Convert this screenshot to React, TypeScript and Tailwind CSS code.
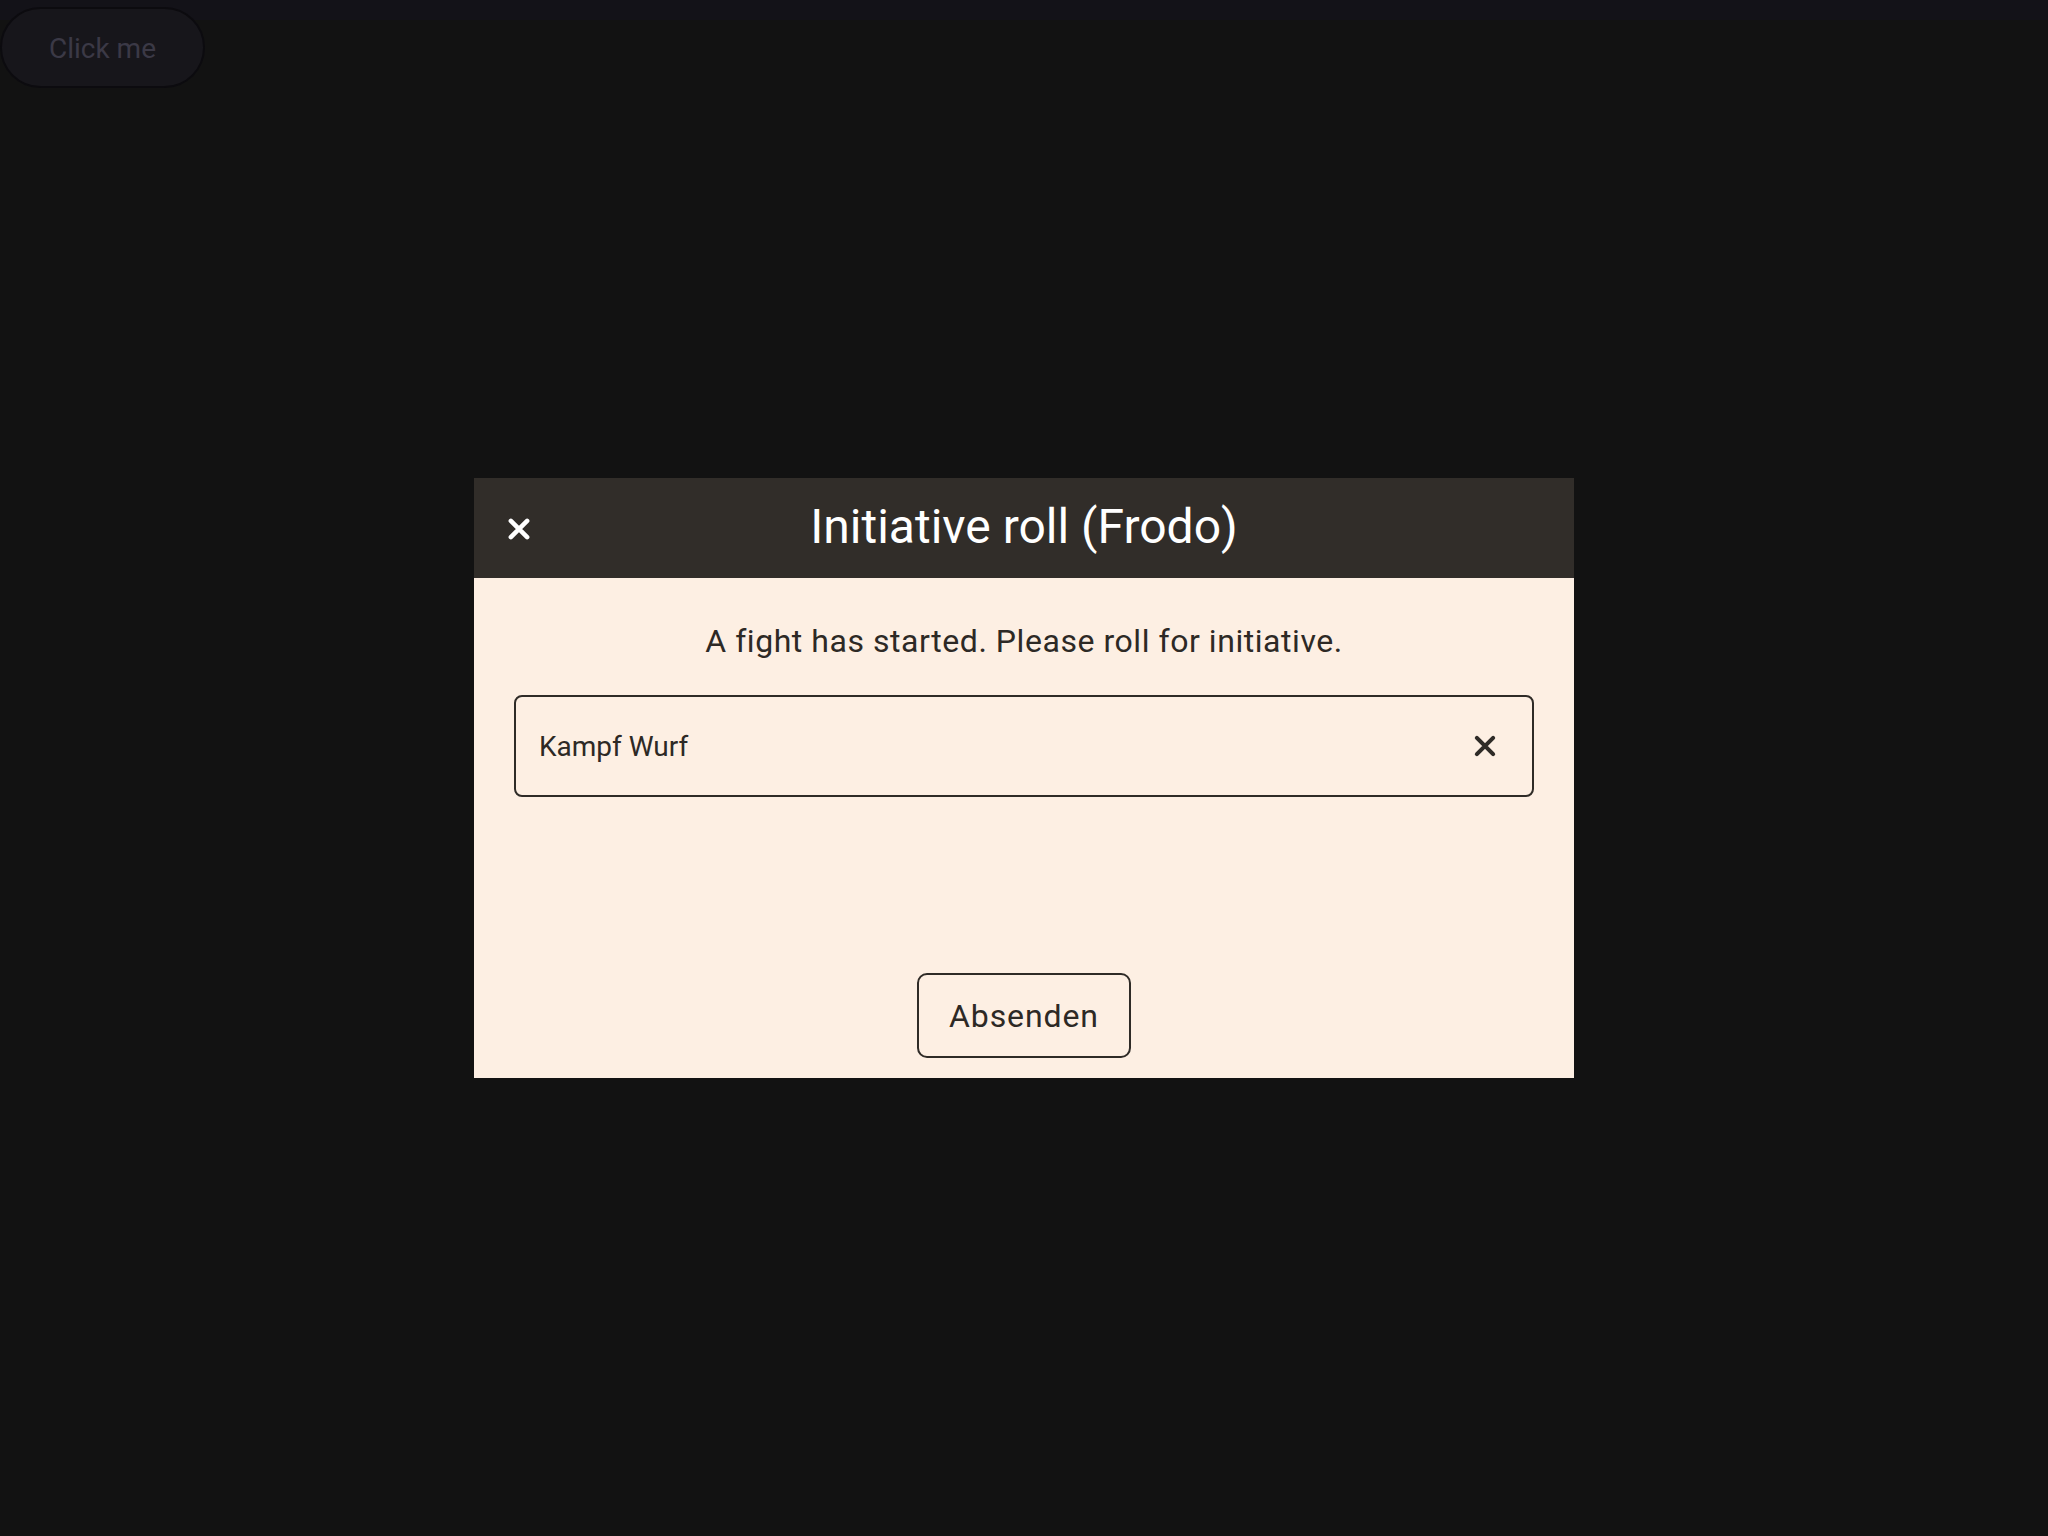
import React from "react";

function XIcon({ size, stroke, color }: { size: number; stroke: number; color: string }) {
  return (
    <svg width={size} height={size} viewBox="0 0 24 24" fill="none">
      <path d="M4.5 4.5 L19.5 19.5 M19.5 4.5 L4.5 19.5" stroke={color} strokeWidth={stroke} strokeLinecap="round" />
    </svg>
  );
}

export default function App() {
  return (
    <div
      className="relative w-full h-[1536px] bg-[#121212] overflow-hidden"
      style={{ fontFamily: "Roboto, 'Noto Sans', sans-serif" }}
    >
      <div className="h-[20px] bg-[#131218]" />
      <button className="absolute top-[7px] left-0 h-[81px] w-[205px] rounded-full bg-[#17161b] border-2 border-[#0c0b0f] text-[28px] text-[#3b3946] flex items-center justify-center pt-[3px]">
        Click me
      </button>

      <div className="absolute inset-0 flex items-start justify-center pt-[478px]">
        <div className="w-[1100px] h-[600px] flex flex-col bg-[#fdefe3]">
          <div className="relative h-[100px] bg-[#312d29] flex items-center justify-center">
            <div className="absolute left-[32px] top-[38px]">
              <XIcon size={26} stroke={4.2} color="#ffffff" />
            </div>
            <h1 className="text-[48px] leading-none text-white pb-[3px]">Initiative roll (Frodo)</h1>
          </div>
          <div className="flex-1 flex flex-col px-[40px] pt-[39px] pb-[20px]">
            <p className="text-center text-[32px] leading-[48px] text-[#2d2925] tracking-[0.55px]">
              A fight has started. Please roll for initiative.
            </p>
            <div className="mt-[30px] h-[102px] border-2 border-[#2f2b27] rounded-[8px] flex items-center pl-[23px] pr-[34px]">
              <span className="flex-1 text-[28px] text-[#2d2925] pt-[1px]">Kampf Wurf</span>
              <XIcon size={26} stroke={3.8} color="#2f2b27" />
            </div>
            <div className="flex-1" />
            <div className="flex justify-center">
              <button className="h-[85px] w-[214px] border-2 border-[#2f2b27] rounded-[10px] text-[32px] text-[#2d2925] tracking-[0.9px] flex items-center justify-center">
                Absenden
              </button>
            </div>
          </div>
        </div>
      </div>
    </div>
  );
}
